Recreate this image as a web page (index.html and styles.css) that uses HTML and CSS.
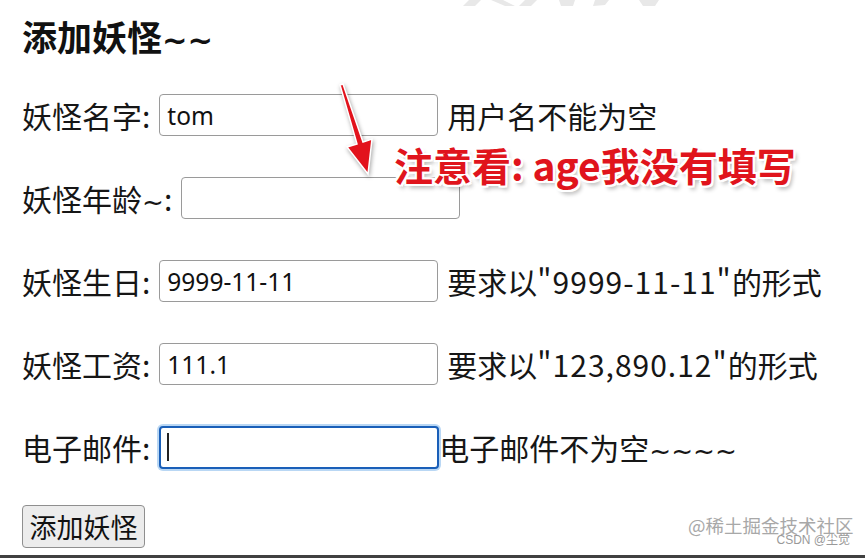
FILE: index.html
```html
<!DOCTYPE html>
<html lang="zh-CN">
<head>
    <meta charset="UTF-8">
    <meta name="viewport" content="width=device-width, initial-scale=1.0">
    <title>添加妖怪</title>
    <link rel="stylesheet" href="styles.css">
</head>
<body>
    <!-- 顶部被裁掉的水印 -->
    <svg class="top-mark" width="260" height="12" viewBox="0 0 260 12">
        <polygon points="44,0 56,0 50,6 38,6" />
        <polygon points="66,0 78,0 90,6 80,6" />
        <polygon points="100,0 112,0 106,6 94,6" />
        <polygon points="134,0 150,0 148,6 136,6" />
        <polygon points="170,0 184,0 180,5 168,6" />
        <polygon points="214,0 234,0 230,6 218,6" />
    </svg>

    <h2 class="title">添加妖怪<span class="tilde">~~</span></h2>

    <form class="monster-form" onsubmit="return false;">
        <div class="row">
            <label class="field-label">妖怪名字:</label>
            <input class="field" type="text" value="tom">
            <span class="tip">用户名不能为空</span>
        </div>
        <div class="row">
            <label class="field-label">妖怪年龄<span class="tilde">~</span>:</label>
            <input class="field" type="text" value="">
        </div>
        <div class="row">
            <label class="field-label">妖怪生日:</label>
            <input class="field" type="text" value="9999-11-11">
            <span class="tip">要求以<span class="latin">"9999-11-11"</span>的形式</span>
        </div>
        <div class="row">
            <label class="field-label">妖怪工资:</label>
            <input class="field" type="text" value="111.1">
            <span class="tip">要求以<span class="latin">"123,890.12"</span>的形式</span>
        </div>
        <div class="row">
            <label class="field-label">电子邮件:</label>
            <span class="caret-wrap"><input class="field focused" type="text" value=""></span>
            <span class="tip tight">电子邮件不为空<span class="tilde">~~~~</span></span>
        </div>
        <button class="submit-btn" type="submit">添加妖怪</button>
    </form>

    <!-- 标注 -->
    <svg class="arrow" width="60" height="110" viewBox="0 0 60 110">
        <polygon points="10,5 13,4 33,62 42,59 38,94 17,67 27,64" />
    </svg>
    <div class="note">注意看: age我没有填写</div>

    <div class="watermark">
        <span class="wm-main">@稀土掘金技术社区</span>
        <span class="wm-sub">CSDN @尘觉</span>
    </div>
</body>
</html>
```

FILE: styles.css
```css
html {
    height: 100%;
}
body {
    margin: 0;
    padding: 16px 0 0 22px;
    min-height: 100vh;
    box-sizing: border-box;
    border-bottom: 3px solid #404040;
    font-family: "Noto Sans CJK SC", "Noto Sans", sans-serif;
    color: #161616;
    background: #fff;
    position: relative;
    overflow: hidden;
}
.top-mark {
    position: absolute;
    top: 0;
    left: 425px;
}
.top-mark polygon {
    fill: #e8e8e8;
}
.title {
    margin: 0 0 38px 0;
    height: 40px;
    line-height: 40px;
    font-size: 35px;
    font-weight: bold;
    color: #111;
}
.tilde {
    font-family: "DejaVu Sans", sans-serif;
    font-size: 0.87em;
    font-weight: normal;
}
.title .tilde {
    font-weight: bold;
}
.latin {
    letter-spacing: 1px;
}
.row {
    display: flex;
    align-items: center;
    height: 42px;
    margin-bottom: 41px;
    font-size: 30px;
}
.field-label {
    margin-right: 9px;
    white-space: nowrap;
}
.field {
    width: 279px;
    height: 42px;
    box-sizing: border-box;
    padding: 0 7px;
    border: 1px solid #9a9a9a;
    border-radius: 4px;
    font-family: "Noto Sans", sans-serif;
    font-size: 24.5px;
    color: #111;
    background: #fff;
    outline: none;
}
.field.focused {
    border: 2px solid #1a5fb8;
    box-shadow: 0 0 0 2px #b9d7f4;
    width: 280px;
    height: 43px;
}
.caret-wrap {
    position: relative;
    display: inline-flex;
}
.caret-wrap::after {
    content: '';
    position: absolute;
    left: 8px;
    top: 7px;
    width: 2px;
    height: 28px;
    background: #222;
}
.tip {
    margin-left: 9px;
    white-space: nowrap;
}
.tip.tight {
    margin-left: 0;
}
.monster-form {
    margin: 0;
}
.submit-btn {
    margin-top: -4px;
    width: 123px;
    height: 43px;
    padding: 0;
    border: 1px solid #8f8f8f;
    border-radius: 4px;
    background: #ececec;
    font-family: "Noto Sans CJK SC", sans-serif;
    font-size: 27px;
    color: #111;
}
.arrow {
    position: absolute;
    left: 330px;
    top: 80px;
    overflow: visible;
}
.arrow polygon {
    fill: #e2121c;
    stroke: #fff;
    stroke-width: 1.5;
    filter: drop-shadow(1px 2px 2px rgba(0, 0, 0, 0.35));
}
.note {
    position: absolute;
    left: 394px;
    top: 140px;
    font-size: 39px;
    font-weight: bold;
    line-height: 48px;
    color: #e0141c;
    white-space: nowrap;
    text-shadow:
        2px 0 0 #fff, -2px 0 0 #fff, 0 2px 0 #fff, 0 -2px 0 #fff,
        2px 2px 0 #fff, -2px -2px 0 #fff, 2px -2px 0 #fff, -2px 2px 0 #fff,
        3px 4px 4px rgba(0, 0, 0, 0.3);
}
.watermark {
    position: absolute;
    right: 15px;
    bottom: 8px;
    width: 162px;
    height: 34px;
    color: #a8a8a8;
}
.wm-main {
    position: absolute;
    left: 0;
    top: 0;
    font-size: 18.5px;
    line-height: 24px;
    white-space: nowrap;
}
.wm-sub {
    position: absolute;
    right: 0;
    bottom: 0;
    font-family: "Liberation Sans", "Noto Sans CJK SC", sans-serif;
    font-size: 12px;
    line-height: 14px;
    color: #999;
    white-space: nowrap;
}
```
